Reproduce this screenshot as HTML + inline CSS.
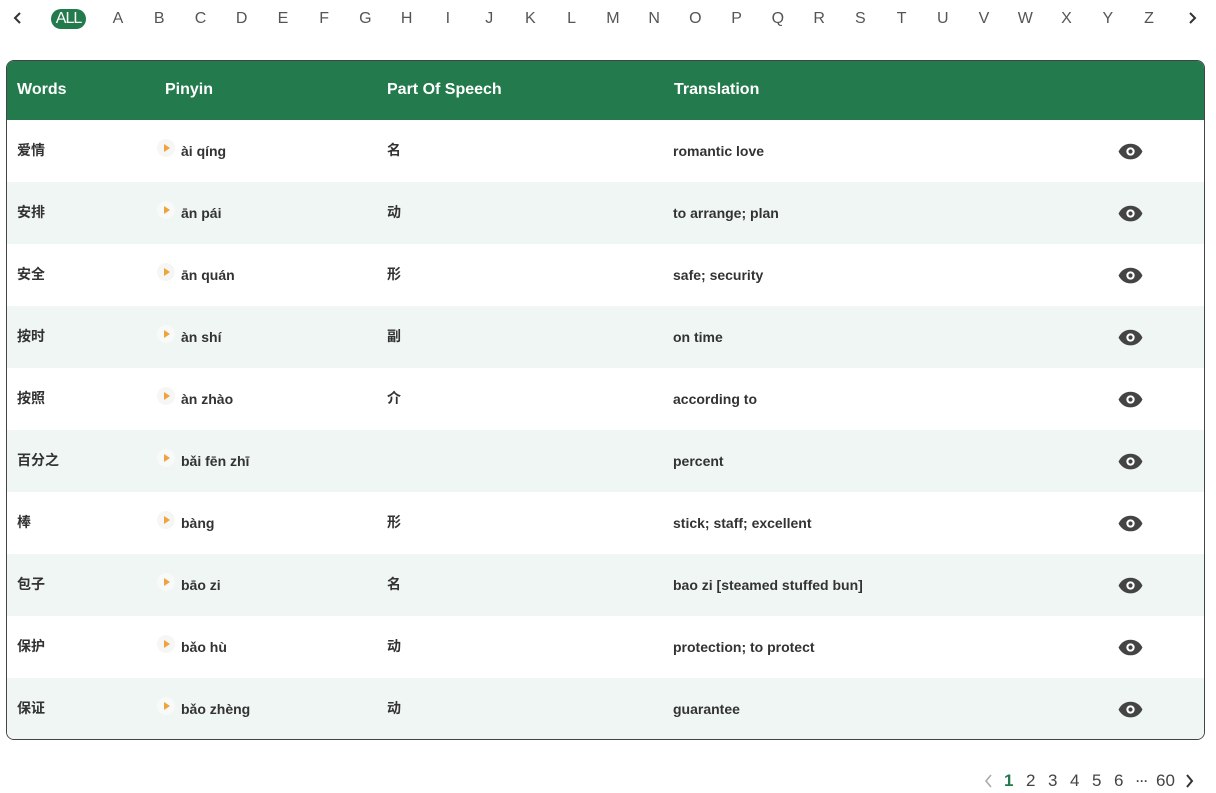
<!DOCTYPE html>
<html><head><meta charset="utf-8"><style>
*{margin:0;padding:0;box-sizing:border-box}
body{width:1216px;height:793px;background:#fff;font-family:"Liberation Sans","Noto Sans CJK SC",sans-serif;position:relative;overflow:hidden;color:#333}
.l{position:absolute;top:9px;width:30px;margin-left:-15px;text-align:center;font-size:16px;color:#555;line-height:19px}
.all{position:absolute;left:51px;top:9px;width:35px;height:20px;border-radius:10px;background:#237a4c;color:#fff;font-size:16px;line-height:20px;text-align:center;letter-spacing:-1px}
.tbl{position:absolute;left:6px;top:60px;width:1199px;height:680px;border:1px solid #444;border-radius:8px;overflow:hidden}
.hd{height:59px;background:#237a4c;color:#fff;font-weight:bold;font-size:16px;position:relative}
.hd span{position:absolute;top:20px}
.r{height:62px;position:relative;font-size:14px;font-weight:bold;color:#333}
.r:nth-child(even){background:#f0f6f4}
.r span{position:absolute;top:22px;line-height:18px}
.r span.c{font-family:"Noto Sans CJK SC",sans-serif;top:20px;line-height:20px}
.pl{position:absolute;left:150px;top:19px;width:18px;height:18px;border-radius:50%;background:#f6f6f4}
.r:nth-child(even) .pl{background:#f8faf9}
.pl:after{content:"";position:absolute;left:7px;top:5px;border-left:6px solid #f0a23c;border-top:4px solid transparent;border-bottom:4px solid transparent}
.eye{position:absolute;left:1111px;top:23px}
.pg{position:absolute;top:771px;font-size:17px;color:#444}
</style></head><body>
<svg style="position:absolute;left:13px;top:11px" width="9" height="14" viewBox="0 0 9 14"><path d="M7 2 L2 7 L7 12" stroke="#333" stroke-width="2" fill="none"/></svg>
<div class="all">ALL</div>
<div class="l" style="left:118px">A</div><div class="l" style="left:159.2px">B</div><div class="l" style="left:200.5px">C</div><div class="l" style="left:241.7px">D</div><div class="l" style="left:283px">E</div><div class="l" style="left:324.2px">F</div><div class="l" style="left:365.4px">G</div><div class="l" style="left:406.7px">H</div><div class="l" style="left:447.9px">I</div><div class="l" style="left:489.2px">J</div><div class="l" style="left:530.4px">K</div><div class="l" style="left:571.6px">L</div><div class="l" style="left:612.9px">M</div><div class="l" style="left:654.1px">N</div><div class="l" style="left:695.4px">O</div><div class="l" style="left:736.6px">P</div><div class="l" style="left:777.8px">Q</div><div class="l" style="left:819.1px">R</div><div class="l" style="left:860.3px">S</div><div class="l" style="left:901.6px">T</div><div class="l" style="left:942.8px">U</div><div class="l" style="left:984px">V</div><div class="l" style="left:1025.3px">W</div><div class="l" style="left:1066.5px">X</div><div class="l" style="left:1107.8px">Y</div><div class="l" style="left:1149px">Z</div>
<svg style="position:absolute;left:1188px;top:11px" width="9" height="14" viewBox="0 0 9 14"><path d="M2 2 L7 7 L2 12" stroke="#333" stroke-width="2" fill="none"/></svg>
<div class="tbl">
<div class="hd"><span style="left:10px">Words</span><span style="left:158px">Pinyin</span><span style="left:380px">Part Of Speech</span><span style="left:667px">Translation</span></div>
<div>
<div class="r"><span class="c" style="left:10px">爱情</span><i class="pl"></i><span style="left:174px">ài qíng</span><span class="c" style="left:380px">名</span><span style="left:666px">romantic love</span><svg class="eye" width="25" height="17" viewBox="0 0 24 16"><path d="M0.5 8C3 3 7 0.5 12 0.5S21 3 23.5 8C21 13 17 15.5 12 15.5S3 13 0.5 8Z" fill="#444"/><circle cx="12" cy="8" r="4" fill="#fff"/><circle cx="12" cy="8" r="2" fill="#444"/></svg></div>
<div class="r"><span class="c" style="left:10px">安排</span><i class="pl"></i><span style="left:174px">ān pái</span><span class="c" style="left:380px">动</span><span style="left:666px">to arrange; plan</span><svg class="eye" width="25" height="17" viewBox="0 0 24 16"><path d="M0.5 8C3 3 7 0.5 12 0.5S21 3 23.5 8C21 13 17 15.5 12 15.5S3 13 0.5 8Z" fill="#444"/><circle cx="12" cy="8" r="4" fill="#fff"/><circle cx="12" cy="8" r="2" fill="#444"/></svg></div>
<div class="r"><span class="c" style="left:10px">安全</span><i class="pl"></i><span style="left:174px">ān quán</span><span class="c" style="left:380px">形</span><span style="left:666px">safe; security</span><svg class="eye" width="25" height="17" viewBox="0 0 24 16"><path d="M0.5 8C3 3 7 0.5 12 0.5S21 3 23.5 8C21 13 17 15.5 12 15.5S3 13 0.5 8Z" fill="#444"/><circle cx="12" cy="8" r="4" fill="#fff"/><circle cx="12" cy="8" r="2" fill="#444"/></svg></div>
<div class="r"><span class="c" style="left:10px">按时</span><i class="pl"></i><span style="left:174px">àn shí</span><span class="c" style="left:380px">副</span><span style="left:666px">on time</span><svg class="eye" width="25" height="17" viewBox="0 0 24 16"><path d="M0.5 8C3 3 7 0.5 12 0.5S21 3 23.5 8C21 13 17 15.5 12 15.5S3 13 0.5 8Z" fill="#444"/><circle cx="12" cy="8" r="4" fill="#fff"/><circle cx="12" cy="8" r="2" fill="#444"/></svg></div>
<div class="r"><span class="c" style="left:10px">按照</span><i class="pl"></i><span style="left:174px">àn zhào</span><span class="c" style="left:380px">介</span><span style="left:666px">according to</span><svg class="eye" width="25" height="17" viewBox="0 0 24 16"><path d="M0.5 8C3 3 7 0.5 12 0.5S21 3 23.5 8C21 13 17 15.5 12 15.5S3 13 0.5 8Z" fill="#444"/><circle cx="12" cy="8" r="4" fill="#fff"/><circle cx="12" cy="8" r="2" fill="#444"/></svg></div>
<div class="r"><span class="c" style="left:10px">百分之</span><i class="pl"></i><span style="left:174px">bǎi fēn zhī</span><span style="left:666px">percent</span><svg class="eye" width="25" height="17" viewBox="0 0 24 16"><path d="M0.5 8C3 3 7 0.5 12 0.5S21 3 23.5 8C21 13 17 15.5 12 15.5S3 13 0.5 8Z" fill="#444"/><circle cx="12" cy="8" r="4" fill="#fff"/><circle cx="12" cy="8" r="2" fill="#444"/></svg></div>
<div class="r"><span class="c" style="left:10px">棒</span><i class="pl"></i><span style="left:174px">bàng</span><span class="c" style="left:380px">形</span><span style="left:666px">stick; staff; excellent</span><svg class="eye" width="25" height="17" viewBox="0 0 24 16"><path d="M0.5 8C3 3 7 0.5 12 0.5S21 3 23.5 8C21 13 17 15.5 12 15.5S3 13 0.5 8Z" fill="#444"/><circle cx="12" cy="8" r="4" fill="#fff"/><circle cx="12" cy="8" r="2" fill="#444"/></svg></div>
<div class="r"><span class="c" style="left:10px">包子</span><i class="pl"></i><span style="left:174px">bāo zi</span><span class="c" style="left:380px">名</span><span style="left:666px">bao zi [steamed stuffed bun]</span><svg class="eye" width="25" height="17" viewBox="0 0 24 16"><path d="M0.5 8C3 3 7 0.5 12 0.5S21 3 23.5 8C21 13 17 15.5 12 15.5S3 13 0.5 8Z" fill="#444"/><circle cx="12" cy="8" r="4" fill="#fff"/><circle cx="12" cy="8" r="2" fill="#444"/></svg></div>
<div class="r"><span class="c" style="left:10px">保护</span><i class="pl"></i><span style="left:174px">bǎo hù</span><span class="c" style="left:380px">动</span><span style="left:666px">protection; to protect</span><svg class="eye" width="25" height="17" viewBox="0 0 24 16"><path d="M0.5 8C3 3 7 0.5 12 0.5S21 3 23.5 8C21 13 17 15.5 12 15.5S3 13 0.5 8Z" fill="#444"/><circle cx="12" cy="8" r="4" fill="#fff"/><circle cx="12" cy="8" r="2" fill="#444"/></svg></div>
<div class="r"><span class="c" style="left:10px">保证</span><i class="pl"></i><span style="left:174px">bǎo zhèng</span><span class="c" style="left:380px">动</span><span style="left:666px">guarantee</span><svg class="eye" width="25" height="17" viewBox="0 0 24 16"><path d="M0.5 8C3 3 7 0.5 12 0.5S21 3 23.5 8C21 13 17 15.5 12 15.5S3 13 0.5 8Z" fill="#444"/><circle cx="12" cy="8" r="4" fill="#fff"/><circle cx="12" cy="8" r="2" fill="#444"/></svg></div>
</div></div>
<svg style="position:absolute;left:984px;top:773px" width="9" height="16" viewBox="0 0 9 16"><path d="M7 2 L2 8 L7 14" stroke="#aaa" stroke-width="1.6" fill="none"/></svg>
<div class="pg" style="left:1004px;color:#237a4c;font-weight:bold">1</div>
<div class="pg" style="left:1026px">2</div>
<div class="pg" style="left:1048px">3</div>
<div class="pg" style="left:1070px">4</div>
<div class="pg" style="left:1092px">5</div>
<div class="pg" style="left:1114px">6</div>
<div class="pg" style="left:1136px;font-size:12px;top:774px;font-weight:bold">···</div>
<div class="pg" style="left:1156px">60</div>
<svg style="position:absolute;left:1185px;top:773px" width="9" height="16" viewBox="0 0 9 16"><path d="M2 2 L7 8 L2 14" stroke="#333" stroke-width="2" fill="none"/></svg>
</body></html>
